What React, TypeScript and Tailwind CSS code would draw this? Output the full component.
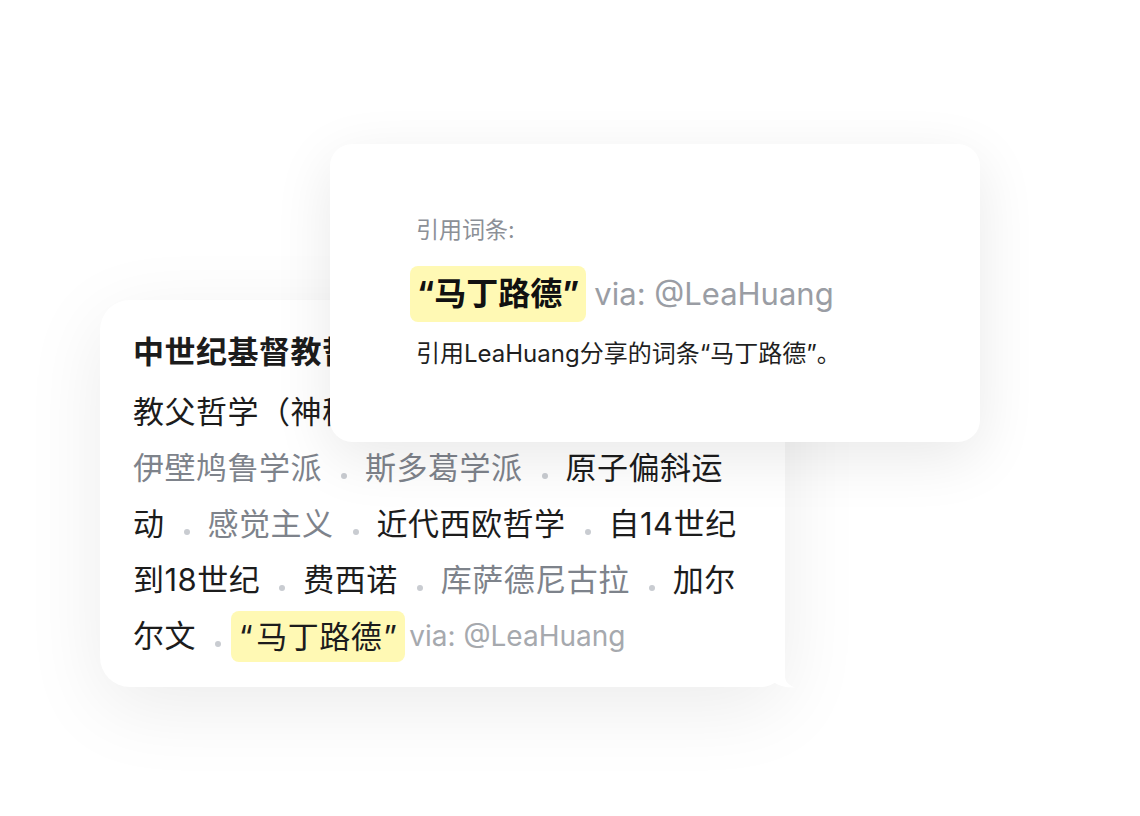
const font = { fontFamily: "Inter, 'Noto Sans CJK SC', sans-serif" }

function Dot() {
  return (
    <span className="inline-block w-[43px] pl-[19px] tracking-normal">
      <span className="inline-block h-[6px] w-[6px] rounded-full bg-[#c9ccd1] align-baseline" />
    </span>
  )
}

function Gray({ children }: { children: React.ReactNode }) {
  return <span className="text-[#7e838b]">{children}</span>
}

function Tail() {
  return (
    <svg
      className="absolute right-[-10px] bottom-[-1px]"
      width="40"
      height="40"
      viewBox="0 0 40 40"
    >
      <path d="M30 8 L30 28 C30 33 33 37 40 39.5 C32 40 25 38 18 34 L10 20 Z" fill="#ffffff" />
    </svg>
  )
}

export default function App() {
  return (
    <div className="relative h-[816px] w-[1140px] overflow-hidden bg-white" style={font}>
      <div className="pl-[100px] pt-[300px]">
        <div className="relative w-[685px] rounded-[30px] rounded-br-[24px] bg-white pb-[23px] pl-[33px] pt-[24px] text-[31px] leading-[56px] tracking-[0.5px] text-[#1c1c1c] shadow-[0_20px_80px_rgba(0,0,0,0.08)]">
          <div className="whitespace-nowrap font-bold">中世纪基督教哲学</div>
          <div className="mt-[4px] whitespace-nowrap">教父哲学（神秘主义）</div>
          <div className="whitespace-nowrap">
            <Gray>伊壁鸠鲁学派</Gray>
            <Dot />
            <Gray>斯多葛学派</Gray>
            <Dot />
            原子偏斜运
          </div>
          <div className="whitespace-nowrap">
            动<Dot />
            <Gray>感觉主义</Gray>
            <Dot />
            近代西欧哲学
            <Dot />
            自14世纪
          </div>
          <div className="whitespace-nowrap">
            到18世纪
            <Dot />
            费西诺
            <Dot />
            <Gray>库萨德尼古拉</Gray>
            <Dot />
            加尔
          </div>
          <div className="flex items-center whitespace-nowrap">
            尔文<Dot />
            <span className="-ml-[8px] rounded-[8px] bg-[#fff9b4] px-[8px] leading-[51px]">
              <span className="mr-[3px]">“</span>马丁路德<span className="ml-[1px]">”</span>
            </span>
            <span className="ml-[4px] text-[28px] tracking-normal text-[#a6a9ae]">via: @LeaHuang</span>
          </div>
          <Tail />
        </div>
      </div>

      <div className="absolute left-[330px] top-[144px] h-[298px] w-[650px] rounded-[22px] bg-white pl-[86px] pt-[71px] shadow-[0_16px_60px_rgba(0,0,0,0.09)]">
        <div className="text-[23px] leading-[30px] text-[#8c9097]">引用词条:</div>
        <div className="mt-[21px] flex items-center whitespace-nowrap">
          <span className="-ml-[6px] rounded-[8px] bg-[#fff9b4] px-[7px] text-[32px] font-bold leading-[56px] text-[#111111]">
            “马丁路德”
          </span>
          <span className="ml-[8px] text-[31px] text-[#9a9da4]">via: @LeaHuang</span>
        </div>
        <div className="mt-[17px] whitespace-nowrap text-[24px] leading-[30px] text-[#1f1f1f]">
          引用LeaHuang分享的词条“马丁路德”。
        </div>
      </div>
    </div>
  )
}
